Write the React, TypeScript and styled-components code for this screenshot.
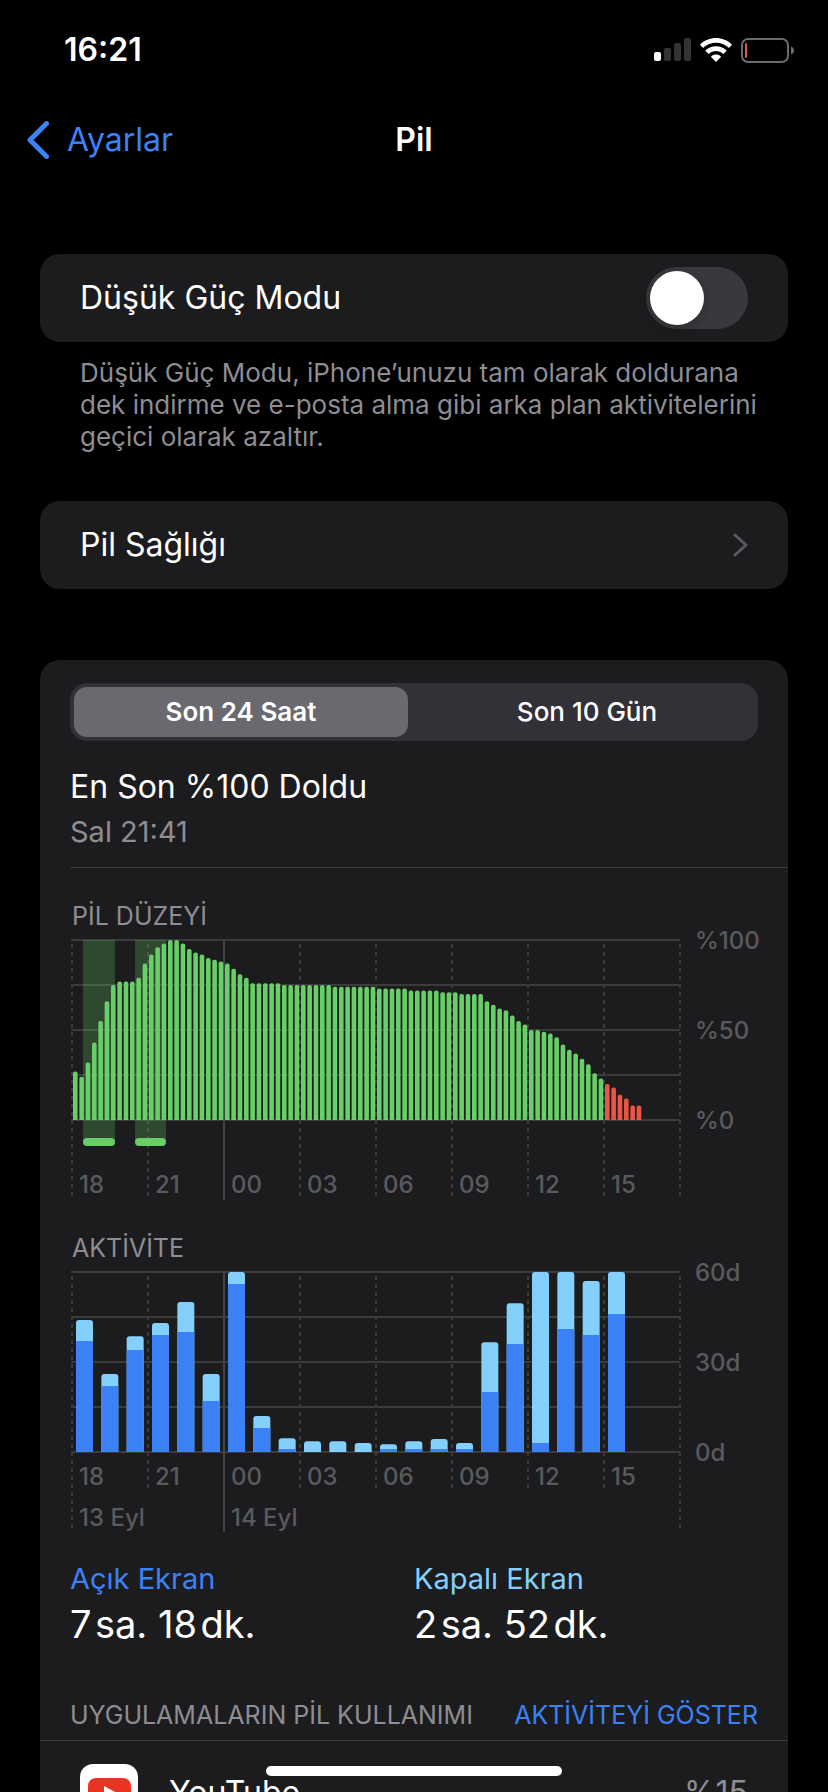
import React, { useState } from "react";
import styled, { createGlobalStyle, css } from "styled-components";

const color = {
  page: "#000000",
  card: "#1c1c1e",
  blue: "#3b82f7",
  sky: "#83d0fc",
  green: "#68ce67",
  red: "#eb5545",
  text: "#ffffff",
  secondary: "#8d8d93",
  axis: "#5a5a5e",
  grid: "#3b3b3e",
};

const GlobalStyle = createGlobalStyle`
  * { box-sizing: border-box; }
  body {
    margin: 0;
    background: ${color.page};
    color: ${color.text};
    font-family: Inter, "Liberation Sans", sans-serif;
    -webkit-font-smoothing: antialiased;
  }
  :where(h1, h2, p, dl, dd, ul) { margin: 0; padding: 0; font-weight: 400; }
  :where(button) { border: 0; background: none; padding: 0; font: inherit; color: inherit; cursor: pointer; }
`;

const Screen = styled.div`
  position: relative;
  height: 100vh;
  display: flex;
  flex-direction: column;
  overflow: hidden;
`;

const StatusBar = styled.header`
  flex: none;
  height: 96px;
  padding: 4px 34px 0 64px;
  display: flex;
  align-items: center;
  justify-content: space-between;
`;

const Clock = styled.time`
  font-size: 32px;
  line-height: 40px;
  font-weight: 600;
`;

const StatusIcons = styled.div`
  display: flex;
  align-items: center;
  gap: 9px;
`;

const NavBar = styled.nav`
  flex: none;
  height: 88px;
  padding: 0 27px;
  display: grid;
  grid-template-columns: 1fr auto 1fr;
  align-items: center;
`;

const BackLink = styled.a`
  display: flex;
  align-items: center;
  gap: 17px;
  color: ${color.blue};
  font-size: 32px;
  line-height: 40px;
  text-decoration: none;
`;

const Title = styled.h1`
  font-weight: 600;
  font-size: 32px;
  line-height: 40px;
`;

const Content = styled.main`
  flex: 1;
  min-height: 0;
  overflow-y: auto;
  scrollbar-width: none;
  padding: 70px 40px 0;
`;

const Card = styled.section`
  background: ${color.card};
  border-radius: 20px;
`;

const rowStyle = css`
  min-height: 88px;
  padding: 0 40px;
  display: flex;
  align-items: center;
  justify-content: space-between;
  font-size: 32px;
  line-height: 40px;
`;

const SwitchRow = styled.label`
  ${rowStyle}
`;

const LinkRow = styled.a`
  ${rowStyle}
  color: inherit;
  text-decoration: none;
`;

const Switch = styled.input`
  appearance: none;
  margin: 0;
  width: 102px;
  height: 62px;
  padding: 4px;
  border-radius: 31px;
  background: #39393d;
  display: flex;
  &::before {
    content: "";
    width: 54px;
    height: 54px;
    border-radius: 50%;
    background: #fff;
    box-shadow: 0 4px 12px rgba(0, 0, 0, 0.2);
  }
  &:checked {
    background: ${color.green};
    justify-content: flex-end;
  }
`;

const Footnote = styled.p`
  padding: 15px 30px 48px 40px;
  font-size: 26px;
  line-height: 32px;
  color: ${color.secondary};
`;

const BatteryCard = styled(Card)`
  margin-top: 71px;
  padding-top: 23px;
`;

const Inset = styled.div`
  padding: 0 30px;
`;

const Segmented = styled.div`
  display: grid;
  grid-template-columns: 1fr 1fr;
  gap: 12px;
  padding: 4px;
  border-radius: 17px;
  background: #323138;
`;

const Segment = styled.button<{ $active: boolean }>`
  height: 50px;
  border-radius: 13px;
  font-size: 26px;
  line-height: 32px;
  font-weight: ${(p) => (p.$active ? 600 : 500)};
  background: ${(p) => (p.$active ? "#6a6970" : "transparent")};
`;

const ChargeTitle = styled.h2`
  padding-top: 26px;
  font-size: 32px;
  line-height: 40px;
`;

const ChargeTime = styled.p`
  padding: 7px 0 17px;
  font-size: 29px;
  line-height: 36px;
  color: ${color.secondary};
`;

const Divider = styled.hr<{ $inset?: boolean }>`
  height: 1px;
  border: 0;
  margin: 0 0 0 ${(p) => (p.$inset ? "30px" : "0")};
  background: ${color.grid};
`;

const SectionLabel = styled.h2`
  font-size: 25px;
  line-height: 32px;
  color: ${color.secondary};
`;

const ChartBlock = styled.div`
  padding: 32px 30px 0;
`;

const ChartLabel = styled(SectionLabel)`
  padding: 0 2px 8px;
`;

const ChartSvg = styled.svg`
  display: block;
  width: 100%;
  height: auto;
  overflow: visible;
  font-size: 24px;
  font-weight: 500;
`;

const Totals = styled.dl`
  display: grid;
  grid-template-columns: 1fr 1fr;
  padding: 29px 30px 0;
`;

const TotalLabel = styled.dt<{ $color: string }>`
  font-size: 29px;
  line-height: 36px;
  color: ${(p) => p.$color};
`;

const TotalValue = styled.dd`
  padding-top: 3px;
  font-size: 38px;
  line-height: 48px;
`;

const UsageHeader = styled.div`
  display: flex;
  justify-content: space-between;
  padding: 51px 30px 9px;
`;

const TextButton = styled.button`
  font-size: 25px;
  line-height: 32px;
  color: ${color.blue};
`;

const AppRow = styled.li`
  list-style: none;
  display: flex;
  align-items: center;
  gap: 31px;
  padding: 23px 40px;
  font-size: 32px;
  line-height: 40px;
`;

const AppName = styled.span`
  flex: 1;
`;

const AppShare = styled.span`
  color: ${color.secondary};
`;

const HomeIndicator = styled.div`
  position: absolute;
  left: 50%;
  bottom: 16px;
  width: 296px;
  height: 10px;
  margin-left: -148px;
  border-radius: 5px;
  background: #fff;
`;

const hours = ["18", "21", "00", "03", "06", "09", "12", "15"];

// battery percentage, one reading per quarter of an hour
const levels = [
  27, 24, 32, 43, 55, 66, 75, 77, 77, 77, 79, 87, 92, 96, 98, 100, 100, 98, 95, 93, 92, 90, 89, 88,
  87, 84, 81, 79, 76, 76, 76, 76, 76, 75, 75, 75, 75, 75, 75, 75, 75, 74, 74, 74, 74, 74, 74, 74,
  73, 73, 73, 73, 73, 72, 72, 72, 72, 72, 71, 71, 71, 70, 70, 70, 70, 66, 64, 62, 61, 58,
  55, 53, 50, 50, 49, 48, 46, 42, 39, 37, 34, 31, 26, 23, 20, 18, 14, 12, 8, 8,
];

// [total minutes, minutes with the screen on], one pair per hour
const activity: [number, number][] = [
  [44, 37], [26, 22], [38.6, 34], [43, 39], [50, 40], [26, 17], [60, 56], [12, 8],
  [4.6, 1], [3.6, 0], [3.6, 0], [3, 0], [2.6, 1], [3.6, 1], [4.3, 1], [3, 1],
  [36.6, 20], [49.6, 36], [60, 3], [60, 41], [57, 39], [60, 46],
];

const LEFT = 2;
const PLOT = 608;
const HEIGHT = 180;
const STEP = PLOT / 8;

function Grid({ labels, labelY, ends }: { labels: string[]; labelY: number; ends: number[] }) {
  return (
    <g>
      {[0, 45, 90, 135, 180].map((y) => (
        <line key={y} x1={LEFT - 1} x2={LEFT + PLOT} y1={y} y2={y} stroke={color.grid} strokeWidth="2" />
      ))}
      {ends.map((end, i) => (
        <line
          key={i}
          x1={LEFT + i * STEP}
          x2={LEFT + i * STEP}
          y1={0}
          y2={end}
          stroke={i === 2 ? "#434346" : color.grid}
          strokeWidth="2"
          strokeDasharray={i === 2 ? undefined : "4 4"}
          strokeDashoffset={4}
        />
      ))}
      {labels.map((label, i) => (
        <text key={label} x={625} y={9 + i * 90} fill={color.axis}>{label}</text>
      ))}
      {hours.map((hour, i) => (
        <text key={hour} x={LEFT + 7 + i * STEP} y={labelY} fill={color.axis}>{hour}</text>
      ))}
    </g>
  );
}

function topRounded(x: number, y: number, w: number, h: number, r: number) {
  const k = Math.min(r, h);
  return `M${x} ${y + h}V${y + k}Q${x} ${y} ${x + k} ${y}H${x + w - k}Q${x + w} ${y} ${x + w} ${y + k}V${y + h}Z`;
}

function LevelChart() {
  const pitch = PLOT / 96;
  return (
    <ChartSvg viewBox="0 0 688 260" role="img" aria-label="Pil düzeyi">
      <Grid labels={["%100", "%50", "%0"]} labelY={253} ends={[256, 256, 260, 256, 256, 256, 256, 256, 256]} />
      {[[13, 32], [65, 31]].map(([x, w]) => (
        <g key={x} fill={color.green}>
          <rect x={x} y={0} width={w} height={202} opacity="0.25" />
          <rect x={x} y={198} width={w} height={8} rx={4} />
        </g>
      ))}
      {levels.map((v, i) => (
        <path
          key={i}
          d={topRounded(LEFT + 1 + i * pitch, HEIGHT - v * 1.8, 4.6, v * 1.8, 2)}
          fill={v > 20 ? color.green : color.red}
        />
      ))}
    </ChartSvg>
  );
}

function ActivityChart() {
  const pitch = PLOT / 24;
  return (
    <ChartSvg viewBox="0 0 688 260" role="img" aria-label="Aktivite">
      <Grid labels={["60d", "30d", "0d"]} labelY={213} ends={[256, 216, 260, 216, 216, 216, 216, 216, 256]} />
      <text x={LEFT + 7} y={254} fill={color.axis}>13 Eyl</text>
      <text x={LEFT + 7 + 2 * STEP} y={254} fill={color.axis}>14 Eyl</text>
      {activity.map(([total, on], i) => (
        <g key={i}>
          <path d={topRounded(LEFT + 4 + i * pitch, HEIGHT - total * 3, 17, total * 3, 3)} fill={color.sky} />
          <rect x={LEFT + 4 + i * pitch} y={HEIGHT - on * 3} width={17} height={on * 3} fill={color.blue} />
        </g>
      ))}
    </ChartSvg>
  );
}

export default function App() {
  const [range, setRange] = useState(0);
  return (
    <Screen>
      <GlobalStyle />
      <StatusBar>
        <Clock>16:21</Clock>
        <StatusIcons>
          <svg width="37" height="24" viewBox="0 0 37 24" aria-hidden="true">
            <rect x="0" y="14" width="7" height="9" rx="2" fill="#fff" />
            <rect x="10" y="10" width="7" height="13" rx="2" fill="#333" />
            <rect x="20" y="5" width="7" height="18" rx="2" fill="#333" />
            <rect x="30" y="0" width="7" height="23" rx="2" fill="#333" />
          </svg>
          <svg width="32" height="24" viewBox="0 0 32 24" fill="#fff" aria-hidden="true">
            <path d="M16 0C22 0 27.500 2.300 31.600 6.200C31.900 6.500 31.900 7 31.600 7.300L29.400 9.500C29.100 9.800 28.700 9.800 28.400 9.500C25 6.400 20.700 4.700 16 4.700S7 6.400 3.600 9.500C3.300 9.800 2.900 9.800 2.600 9.500L.4 7.300C.1 7 .1 6.500 .4 6.200C4.500 2.300 10 0 16 0Z" />
            <path d="M16 8.200C19.900 8.200 23.500 9.700 26.200 12.100C26.500 12.400 26.500 12.900 26.200 13.200L23.900 15.500C23.600 15.800 23.200 15.800 22.900 15.500C21 13.900 18.600 12.900 16 12.900S11 13.900 9.100 15.500C8.800 15.800 8.400 15.800 8.100 15.500L5.800 13.200C5.500 12.900 5.500 12.400 5.800 12.100C8.500 9.700 12.100 8.200 16 8.200Z" />
            <path d="M16 16.600C17.800 16.600 19.500 17.200 20.700 18.200C21 18.500 21 18.900 20.700 19.200L16.500 23.400C16.200 23.700 15.800 23.700 15.500 23.400L11.300 19.200C11 18.900 11 18.500 11.300 18.200C12.500 17.200 14.200 16.600 16 16.600Z" />
          </svg>
          <svg width="53" height="25" viewBox="0 0 53 25" aria-hidden="true">
            <rect x="1" y="1" width="46" height="23" rx="6" fill="none" stroke="#6b6b6b" strokeWidth="2" />
            <rect x="4" y="5" width="2" height="15" rx="1" fill={color.red} />
            <path d="M50 8.500C52 9.200 53 10.700 53 12.500S52 15.800 50 16.500Z" fill="#6b6b6b" />
          </svg>
        </StatusIcons>
      </StatusBar>
      <NavBar>
        <BackLink href="#ayarlar">
          <svg width="23" height="38" viewBox="0 0 23 38" fill="none" stroke="currentColor" strokeWidth="5" strokeLinecap="round" strokeLinejoin="round" aria-hidden="true">
            <path d="M19.500 2.500L3 19L19.500 35.500" />
          </svg>
          Ayarlar
        </BackLink>
        <Title>Pil</Title>
      </NavBar>
      <Content>
        <Card>
          <SwitchRow>
            Düşük Güç Modu
            <Switch type="checkbox" role="switch" />
          </SwitchRow>
        </Card>
        <Footnote>
          Düşük Güç Modu, iPhone’unuzu tam olarak doldurana dek indirme ve e-posta alma gibi arka plan
          aktivitelerini geçici olarak azaltır.
        </Footnote>
        <Card>
          <LinkRow href="#pil-sagligi">
            Pil Sağlığı
            <svg width="15" height="24" viewBox="0 0 15 24" fill="none" stroke={color.axis} strokeWidth="3" strokeLinecap="round" strokeLinejoin="round" aria-hidden="true">
              <path d="M2 2L13 12L2 22" />
            </svg>
          </LinkRow>
        </Card>
        <BatteryCard>
          <Inset>
            <Segmented>
              {["Son 24 Saat", "Son 10 Gün"].map((name, i) => (
                <Segment key={name} type="button" $active={range === i} aria-pressed={range === i} onClick={() => setRange(i)}>
                  {name}
                </Segment>
              ))}
            </Segmented>
            <ChargeTitle>En Son %100 Doldu</ChargeTitle>
            <ChargeTime>Sal 21:41</ChargeTime>
          </Inset>
          <Divider $inset />
          <ChartBlock>
            <ChartLabel>PİL DÜZEYİ</ChartLabel>
            <LevelChart />
          </ChartBlock>
          <ChartBlock>
            <ChartLabel>AKTİVİTE</ChartLabel>
            <ActivityChart />
          </ChartBlock>
          <Totals>
            <div>
              <TotalLabel $color={color.blue}>Açık Ekran</TotalLabel>
              <TotalValue>7&#8202;sa. 18&#8202;dk.</TotalValue>
            </div>
            <div>
              <TotalLabel $color={color.sky}>Kapalı Ekran</TotalLabel>
              <TotalValue>2&#8202;sa. 52&#8202;dk.</TotalValue>
            </div>
          </Totals>
          <UsageHeader>
            <SectionLabel>UYGULAMALARIN PİL KULLANIMI</SectionLabel>
            <TextButton type="button">AKTİVİTEYİ GÖSTER</TextButton>
          </UsageHeader>
          <Divider />
          <ul>
            <AppRow>
              <svg width="58" height="58" viewBox="0 0 58 58" aria-hidden="true">
                <rect width="58" height="58" rx="13" fill="#fff" />
                <rect x="8" y="14" width="43" height="30" rx="8" fill="#e93323" />
                <path d="M24 22L37 29L24 36Z" fill="#fff" />
              </svg>
              <AppName>YouTube</AppName>
              <AppShare>%15</AppShare>
            </AppRow>
          </ul>
        </BatteryCard>
      </Content>
      <HomeIndicator />
    </Screen>
  );
}
